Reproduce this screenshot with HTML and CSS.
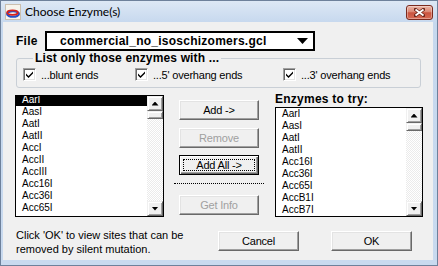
FILE: index.html
```html
<!DOCTYPE html>
<html lang="en">
<head>
    <meta charset="UTF-8">
    <title>Choose Enzyme(s)</title>
    <link rel="stylesheet" href="styles.css">
</head>
<body>
    <div class="window">
        <div class="titlebar">
            <svg class="app-icon" width="16" height="16" viewBox="0 0 16 16">
                <rect x="0.5" y="0.5" width="15" height="15" fill="#f7f4ec" stroke="#cbbfae"/>
                <ellipse cx="8" cy="10" rx="6" ry="2.8" fill="none" stroke="#2450c8" stroke-width="2"/>
                <ellipse cx="7.5" cy="8.6" rx="5.3" ry="2.3" fill="none" stroke="#d8201c" stroke-width="1.8"/>
            </svg>
            <span class="title">Choose Enzyme(s)</span>
            <div class="close-btn">
                <svg width="11" height="9" viewBox="0 0 11 9">
                    <path d="M1.5 1.5l8 6M9.5 1.5l-8 6" stroke="#6b2418" stroke-width="3.4" stroke-linecap="square"/>
                    <path d="M1.5 1.5l8 6M9.5 1.5l-8 6" stroke="#fff" stroke-width="1.8"/>
                </svg>
            </div>
        </div>

        <div class="frame-body">
            <div class="client">
                <!-- enzyme file -->
                <div class="file-row">
                    <span class="file-label">File</span>
                    <div class="combo">
                        <span>commercial_no_isoschizomers.gcl</span>
                        <span class="combo-arrow"></span>
                    </div>
                </div>

                <!-- end type filter -->
                <fieldset class="filter-group">
                    <legend>List only those enzymes with ...</legend>
                    <div class="checks">
                        <label class="check"><span class="box"><svg width="7" height="7" viewBox="0 0 7 7"><path d="M0 2.5l2.5 2.5L7 0.5v2L2.5 7 0 4.5z"/></svg></span>...blunt ends</label>
                        <label class="check"><span class="box"><svg width="7" height="7" viewBox="0 0 7 7"><path d="M0 2.5l2.5 2.5L7 0.5v2L2.5 7 0 4.5z"/></svg></span>...5' overhang ends</label>
                        <label class="check"><span class="box"><svg width="7" height="7" viewBox="0 0 7 7"><path d="M0 2.5l2.5 2.5L7 0.5v2L2.5 7 0 4.5z"/></svg></span>...3' overhang ends</label>
                    </div>
                </fieldset>

                <div class="main">
                    <div class="listbox source">
                        <ul class="items scrolled">
                            <li class="selected">AarI</li>
                            <li>AasI</li>
                            <li>AatI</li>
                            <li>AatII</li>
                            <li>AccI</li>
                            <li>AccII</li>
                            <li>AccIII</li>
                            <li>Acc16I</li>
                            <li>Acc36I</li>
                            <li>Acc65I</li>
                        </ul>
                        <div class="vscroll">
                            <span class="sb-btn"><span class="arrow-up"></span></span>
                            <span class="sb-thumb"></span>
                            <span class="sb-track"></span>
                            <span class="sb-btn"><span class="arrow-down"></span></span>
                        </div>
                    </div>

                    <div class="actions">
                        <button class="btn">Add -&gt;</button>
                        <button class="btn" disabled>Remove</button>
                        <button class="btn default">Add All -&gt;</button>
                        <div class="separator"></div>
                        <button class="btn" disabled>Get Info</button>
                    </div>

                    <div class="target">
                        <div class="target-label">Enzymes to try:</div>
                        <div class="listbox chosen">
                            <ul class="items">
                                <li>AarI</li>
                                <li>AasI</li>
                                <li>AatI</li>
                                <li>AatII</li>
                                <li>Acc16I</li>
                                <li>Acc36I</li>
                                <li>Acc65I</li>
                                <li>AccB1I</li>
                                <li>AccB7I</li>
                            </ul>
                            <div class="vscroll">
                                <span class="sb-btn"><span class="arrow-up"></span></span>
                                <span class="sb-thumb"></span>
                                <span class="sb-track"></span>
                                <span class="sb-btn"><span class="arrow-down"></span></span>
                            </div>
                        </div>
                    </div>
                </div>

                <div class="footer">
                    <p class="hint">Click 'OK' to view sites that can be<br>removed by silent mutation.</p>
                    <button class="btn wide">Cancel</button>
                    <button class="btn wide ok">OK</button>
                </div>
            </div>
        </div>
    </div>
</body>
</html>
```

FILE: styles.css
```css
body {
    margin: 0;
    font-family: "Liberation Sans", Arial, sans-serif;
    font-size: 11px;
    color: #000;
}
.window {
    width: 438px;
    height: 266px;
    box-sizing: border-box;
    border: 1px solid #6e819b;
    background: linear-gradient(#dde8f5, #c6d8ee 22px, #c9daef);
    display: flex;
    flex-direction: column;
}
.titlebar {
    height: 21px;
    display: flex;
    align-items: center;
    padding-left: 4px;
}
.app-icon {
    flex: none;
}
.title {
    margin-left: 4px;
    font-family: Lato, "Liberation Sans", sans-serif;
    font-size: 12px;
    color: #000;
}
.close-btn {
    margin-left: auto;
    margin-right: 4px;
    align-self: flex-start;
    margin-top: 4px;
    width: 27px;
    height: 15px;
    box-sizing: border-box;
    border: 1px solid #7b2a1e;
    border-radius: 3px;
    background: linear-gradient(#ebb6a8, #dc8672 45%, #c9533e 52%, #d66b54);
    box-shadow: inset 0 0 0 1px rgba(255, 255, 255, 0.35);
    display: flex;
    align-items: center;
    justify-content: center;
}
.frame-body {
    flex: 1;
    display: flex;
    padding: 0 4px 5px 2px;
}
.client {
    flex: 1;
    background: #f0f0f0;
    padding: 9px 0 0 12px;
    display: flex;
    flex-direction: column;
}

/* file row */
.file-row {
    display: flex;
    align-items: center;
    margin-left: 1px;
}
.file-label {
    width: 29px;
    font-weight: bold;
    font-size: 12px;
    letter-spacing: 0.25px;
}
.combo {
    width: 270px;
    height: 20px;
    box-sizing: border-box;
    border: 2px solid #000;
    background: #fff;
    display: flex;
    align-items: center;
    padding-left: 13px;
    font-weight: bold;
    font-size: 12px;
    letter-spacing: 0.25px;
}
.combo-arrow {
    margin-left: auto;
    margin-right: 5px;
    width: 11px;
    height: 6px;
    background: #000;
    clip-path: polygon(0 0, 100% 0, 50% 100%);
}

/* filter group */
.filter-group {
    margin: 0 12px 0 1px;
    padding: 0;
    min-inline-size: 0;
    border: 1px solid #c9cfd6;
    border-radius: 3px;
}
.filter-group legend {
    margin-left: 16px;
    padding: 0 2px;
    font-weight: bold;
    font-size: 12px;
    line-height: 14px;
    letter-spacing: 0.15px;
}
.checks {
    display: grid;
    grid-template-columns: 112px 148px auto;
    padding: 3px 0 6px 6px;
}
.check {
    display: flex;
    align-items: center;
    gap: 5px;
    height: 13px;
    letter-spacing: -0.2px;
}
.box {
    width: 13px;
    height: 13px;
    box-sizing: border-box;
    background: #fff;
    border: 1px solid;
    border-color: #a0a0a0 #fff #fff #a0a0a0;
    box-shadow: inset 1px 1px #696969, inset -1px -1px #e3e3e3;
    display: flex;
    align-items: center;
    justify-content: center;
}

/* lists and actions */
.main {
    display: flex;
    margin-top: 7px;
    height: 122px;
}
.listbox {
    display: flex;
    box-sizing: border-box;
    border: 1px solid #000;
    background: #fff;
    overflow: hidden;
}
.listbox.source {
    width: 149px;
    height: 122px;
}
.listbox.chosen {
    width: 148px;
    height: 110px;
    margin-top: 2px;
}
.items {
    flex: 1;
    list-style: none;
    margin: 0;
    padding: 0;
    font-size: 10px;
    line-height: 12px;
    overflow: hidden;
}
.items li {
    padding-left: 6px;
    white-space: nowrap;
}
.items.scrolled {
    margin-top: -2px;
}
.items li.selected {
    background: #000;
    color: #fff;
}
.vscroll {
    width: 16px;
    flex: none;
    display: flex;
    flex-direction: column;
    background: repeating-conic-gradient(#fff 0 25%, #ebebeb 0 50%) 0 0 / 2px 2px;
}
.sb-btn,
.sb-thumb {
    box-sizing: border-box;
    background: #f0f0f0;
    border: 1px solid;
    border-color: #f0f0f0 #696969 #696969 #f0f0f0;
    box-shadow: inset 1px 1px #fff, inset -1px -1px #a0a0a0;
}
.sb-btn {
    height: 15px;
    display: flex;
    align-items: center;
    justify-content: center;
}
.sb-thumb {
    height: 8px;
}
.sb-track {
    flex: 1;
}
.arrow-up,
.arrow-down {
    width: 7px;
    height: 4px;
    background: #000;
}
.arrow-up {
    clip-path: polygon(50% 0, 100% 100%, 0 100%);
}
.arrow-down {
    clip-path: polygon(0 0, 100% 0, 50% 100%);
}

.actions {
    width: 80px;
    margin-left: 15px;
    display: flex;
    flex-direction: column;
    padding-top: 5px;
}
.actions .btn + .btn {
    margin-top: 8px;
}
.actions .btn.default {
    margin-top: 7px;
}
.separator {
    margin: 8px -5px 0 -5px;
    border-top: 1px dotted #000;
}
.actions .separator + .btn {
    margin-top: 11px;
}
.target {
    margin-left: 16px;
    display: flex;
    flex-direction: column;
}
.target-label {
    height: 12px;
    margin-top: -2px;
    font-weight: bold;
    font-size: 12px;
    line-height: 12px;
    letter-spacing: 0.25px;
}

/* buttons */
.btn {
    width: 80px;
    height: 20px;
    box-sizing: border-box;
    padding: 0;
    font-family: "Liberation Sans", Arial, sans-serif;
    font-size: 11px;
    letter-spacing: -0.2px;
    color: #000;
    background: #f0f0f0;
    border: 1px solid;
    border-color: #fff #696969 #696969 #fff;
    box-shadow: inset -1px -1px #a0a0a0, inset 1px 1px #e3e3e3;
}
.btn:disabled {
    color: #a0a0a0;
}
.btn.default {
    border-color: #000;
    box-shadow: inset 1px 1px #fff, inset -1px -1px #696969, inset -2px -2px #a0a0a0;
    outline: 1px dotted #000;
    outline-offset: -5px;
}
.btn.wide {
    width: 81px;
    margin-top: 3px;
}
.btn.ok {
    margin-left: 32px;
}

/* footer */
.footer {
    display: flex;
    align-items: flex-start;
    margin-top: 11px;
}
.hint {
    margin: 0 0 0 1px;
    flex: 1;
    line-height: 14px;
}
.footer .ok {
    margin-right: 21px;
}
```
